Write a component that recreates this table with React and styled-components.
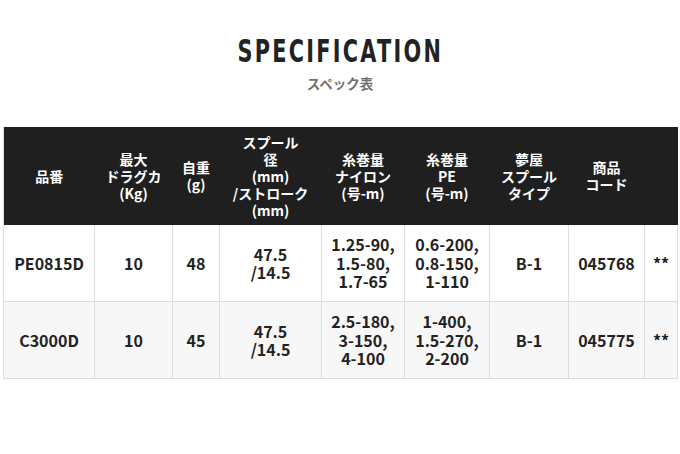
import styled, { createGlobalStyle } from 'styled-components';

const GlobalStyle = createGlobalStyle`
    html, body {
        margin: 0;
        padding: 0;
        background: #ffffff;
    }
    body {
        font-family: "Noto Sans CJK JP", "Noto Sans", sans-serif;
        color: #222222;
    }
`;

const Page = styled.div`
    width: 680px;
    padding: 32px 3px 0;
    box-sizing: border-box;
`;

const Heading = styled.div`
    display: flex;
    flex-direction: column;
    align-items: center;
    margin-bottom: 35px;
`;

// no condensed face installed, so squeeze the bold sans horizontally
const Title = styled.h2`
    margin: 0;
    font-family: "DejaVu Sans", sans-serif;
    font-weight: 700;
    font-size: 32px;
    line-height: 38px;
    letter-spacing: 3.5px;
    color: #222222;
    transform: scaleX(0.65);
`;

const Subtitle = styled.div`
    margin-top: 4px;
    font-size: 13.5px;
    font-weight: 700;
    line-height: 18px;
    color: #707070;
`;

const Table = styled.table`
    width: 674px;
    table-layout: fixed;
    border-collapse: collapse;
    border-left: 1px solid #dddddd;
`;

const HeadCell = styled.th`
    background: #1f1f1f;
    color: #ffffff;
    font-size: 14px;
    font-weight: 700;
    line-height: 17px;
    padding: 6.5px 2px;
    text-align: center;
    vertical-align: middle;
`;

const Row = styled.tr`
    background: ${p => (p.$alt ? '#f7f7f7' : '#ffffff')};
`;

const Cell = styled.td`
    height: 56px;
    padding: 10px 2px;
    border-right: 1px solid #dddddd;
    border-bottom: 1px solid #dddddd;
    font-size: 16px;
    font-weight: 700;
    line-height: 18.5px;
    text-align: center;
    vertical-align: middle;
    color: #222222;
`;

const widths = [91, 78, 47, 102, 83, 85, 79, 76, 33];

const headers = [
    ['品番'],
    ['最大', 'ドラグカ', '(Kg)'],
    ['自重', '(g)'],
    ['スプール', '径', '(mm)', '/ストローク', '(mm)'],
    ['糸巻量', 'ナイロン', '(号-m)'],
    ['糸巻量', 'PE', '(号-m)'],
    ['夢屋', 'スプール', 'タイプ'],
    ['商品', 'コード'],
    [],
];

const rows = [
    [['PE0815D'], ['10'], ['48'], ['47.5', '/14.5'], ['1.25-90,', '1.5-80,', '1.7-65'], ['0.6-200,', '0.8-150,', '1-110'], ['B-1'], ['045768'], ['**']],
    [['C3000D'], ['10'], ['45'], ['47.5', '/14.5'], ['2.5-180,', '3-150,', '4-100'], ['1-400,', '1.5-270,', '2-200'], ['B-1'], ['045775'], ['**']],
];

const Lines = ({ lines }) =>
    lines.map((l, i) => (
        <span key={i}>
            {i > 0 && <br />}
            {l}
        </span>
    ));

const App = () => {
    return (
        <Page>
            <GlobalStyle />
            <Heading>
                <Title>SPECIFICATION</Title>
                <Subtitle>スペック表</Subtitle>
            </Heading>
            <Table>
                <colgroup>
                    {widths.map((w, i) => (
                        <col key={i} style={{ width: w + 'px' }} />
                    ))}
                </colgroup>
                <thead>
                    <tr>
                        {headers.map((h, i) => (
                            <HeadCell key={i}>
                                <Lines lines={h} />
                            </HeadCell>
                        ))}
                    </tr>
                </thead>
                <tbody>
                    {rows.map((r, ri) => (
                        <Row key={ri} $alt={ri % 2 === 1}>
                            {r.map((c, ci) => (
                                <Cell key={ci}>
                                    <Lines lines={c} />
                                </Cell>
                            ))}
                        </Row>
                    ))}
                </tbody>
            </Table>
        </Page>
    );
};

export default App;
